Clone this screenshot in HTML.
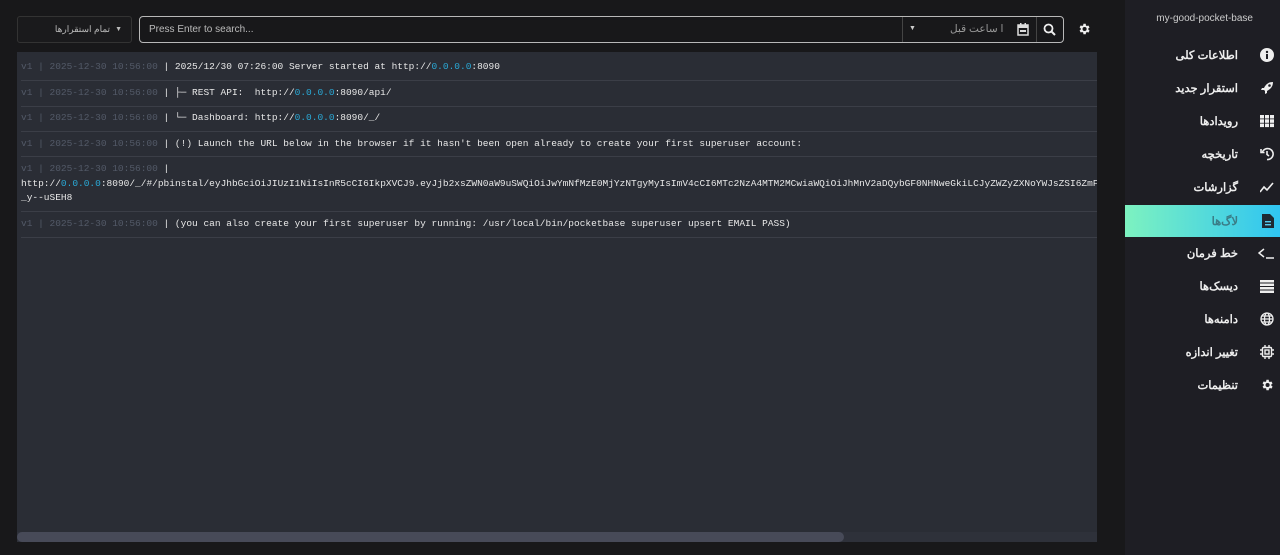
<!DOCTYPE html>
<html><head><meta charset="utf-8"><style>
*{box-sizing:border-box;margin:0;padding:0}
body{width:1280px;height:555px;background:#18181a;font-family:"Liberation Sans","Noto Sans CJK SC",sans-serif;position:relative;overflow:hidden;color:#ddd}
.sel{position:absolute;left:17px;top:16px;width:115px;height:27px;border:1px solid #333;border-radius:3px;background:#1a1a1c;font-size:9px;color:#bbb;display:flex;align-items:center;justify-content:flex-end;padding-right:9px;gap:5px}
.search{position:absolute;left:139px;top:16px;width:925px;height:27px;border:1px solid #b8b8b8;border-radius:4px;background:#18181a}
.search .ph{position:absolute;left:9px;top:7px;font-size:10px;color:#bbb}
.panel{position:absolute;left:17px;top:52px;width:1080px;height:490px;background:#2a2d35;overflow:hidden}
.row{position:absolute;left:4px;right:0;border-bottom:1px solid #3b3e47;font:9.5px/14.5px "Liberation Mono",monospace;color:#e8e8e8;white-space:pre;padding-left:0}
.d{color:#535a68}.c{color:#2aa9d6}
.sb{position:absolute;left:0;bottom:0;width:100%;height:10px;background:#2e313a}
.th{position:absolute;left:0;bottom:0;width:827px;height:10px;background:#474a58;border-radius:5px}
.side{position:absolute;left:1125px;top:0;width:155px;height:555px;background:#1e1e24}
.title{position:absolute;right:27px;top:13px;font-size:10px;color:#ccc}
.it{position:absolute;left:0;width:155px;height:33px;font-size:11.5px;font-weight:bold;color:#eee}
.it span{position:absolute;right:42px;top:9px;direction:rtl;white-space:nowrap}
.it svg{position:absolute;right:6px;top:9px}
.act{background:linear-gradient(90deg,#7df2c0,#2fc5f2);color:#3a7c86}
</style></head><body>
<div class="sel"><span>تمام استقرارها</span><span style="font-size:7px">▼</span></div>
<div class="search"><span class="ph">Press Enter to search...</span>
<div style="position:absolute;left:762px;top:0;width:1px;height:25px;background:#444"></div>
<span style="position:absolute;left:769px;top:8px;font-size:7px;color:#ccc">▼</span>
<span style="position:absolute;left:810px;top:6px;font-size:10.5px;color:#999;direction:rtl">ا ساعت قبل</span>
<svg style="position:absolute;left:877px;top:6px" width="12" height="13" viewBox="0 0 12 13"><rect x="1" y="2" width="10" height="10" fill="none" stroke="#ddd" stroke-width="1.5"/><rect x="1" y="2" width="10" height="3" fill="#ddd"/><rect x="3" y="0" width="1.5" height="3" fill="#ddd"/><rect x="7.5" y="0" width="1.5" height="3" fill="#ddd"/><rect x="3" y="7" width="6" height="2" fill="#ddd"/></svg>
<div style="position:absolute;left:896px;top:0;width:1px;height:25px;background:#444"></div>
<svg style="position:absolute;left:903px;top:6px" width="13" height="13" viewBox="0 0 13 13"><circle cx="5.5" cy="5.5" r="4" fill="none" stroke="#eee" stroke-width="1.8"/><path d="M8.5 8.5L12 12" stroke="#eee" stroke-width="2"/></svg>
</div>
<svg style="position:absolute;left:1077px;top:22px" width="14" height="14" viewBox="0 0 24 24"><path fill="#eee" d="M19.4 13a7.5 7.5 0 000-2l2.1-1.6-2-3.5-2.5 1a7 7 0 00-1.7-1L15 3h-4l-.4 2.8a7 7 0 00-1.7 1l-2.5-1-2 3.5L6.5 11a7.5 7.5 0 000 2l-2.1 1.6 2 3.5 2.5-1a7 7 0 001.7 1L11 21h4l.4-2.8a7 7 0 001.7-1l2.5 1 2-3.5zM13 15.5a3.5 3.5 0 110-7 3.5 3.5 0 010 7z"/></svg>
<div class="panel">
<div class="row" style="top:8px;height:21px"><span class="d">v1 | 2025-12-30 10:56:00 </span>| 2025/12/30 07:26:00 Server started at http://<span class="c">0.0.0.0</span>:8090</div>
<div class="row" style="top:34px;height:21px"><span class="d">v1 | 2025-12-30 10:56:00 </span>| ├─ REST API:  http://<span class="c">0.0.0.0</span>:8090/api/</div>
<div class="row" style="top:59px;height:21px"><span class="d">v1 | 2025-12-30 10:56:00 </span>| └─ Dashboard: http://<span class="c">0.0.0.0</span>:8090/_/</div>
<div class="row" style="top:85px;height:20px"><span class="d">v1 | 2025-12-30 10:56:00 </span>| (!) Launch the URL below in the browser if it hasn't been open already to create your first superuser account:</div>
<div class="row" style="top:110px;height:50px"><span class="d">v1 | 2025-12-30 10:56:00 </span>|
http://<span class="c">0.0.0.0</span>:8090/_/#/pbinstal/eyJhbGciOiJIUzI1NiIsInR5cCI6IkpXVCJ9.eyJjb2xsZWN0aW9uSWQiOiJwYmNfMzE0MjYzNTgyMyIsImV4cCI6MTc2NzA4MTM2MCwiaWQiOiJhMnV2aDQybGF0NHNweGkiLCJyZWZyZXNoYWJsZSI6ZmFsc2V9
_y--uSEH8</div>
<div class="row" style="top:165px;height:21px"><span class="d">v1 | 2025-12-30 10:56:00 </span>| (you can also create your first superuser by running: /usr/local/bin/pocketbase superuser upsert EMAIL PASS)</div>
<div class="sb"><div class="th"></div></div>
</div>
<div class="side">
<div class="title">my-good-pocket-base</div>
<div class="it" style="top:39px"><span>اطلاعات کلی</span><svg width="14" height="14" viewBox="0 0 14 14"><circle cx="7" cy="7" r="7" fill="#eee"/><rect x="6" y="6" width="2" height="5" fill="#1e1e24"/><circle cx="7" cy="4" r="1.2" fill="#1e1e24"/></svg></div>
<div class="it" style="top:72px"><span>استقرار جدید</span><svg width="14" height="14" viewBox="0 0 14 14"><path d="M13 1C9 1 6 3 4 7L2 7 1 9 4 9 5 10 5 13 7 12 7 10C11 8 13 5 13 1z" fill="#eee"/><circle cx="9.5" cy="4.5" r="1.3" fill="#1e1e24"/></svg></div>
<div class="it" style="top:105px"><span>رویدادها</span><svg width="14" height="14" viewBox="0 0 14 14" fill="#eee"><rect x="0" y="1" width="4" height="3.5"/><rect x="5" y="1" width="4" height="3.5"/><rect x="10" y="1" width="4" height="3.5"/><rect x="0" y="5.3" width="4" height="3.5"/><rect x="5" y="5.3" width="4" height="3.5"/><rect x="10" y="5.3" width="4" height="3.5"/><rect x="0" y="9.6" width="4" height="3.5"/><rect x="5" y="9.6" width="4" height="3.5"/><rect x="10" y="9.6" width="4" height="3.5"/></svg></div>
<div class="it" style="top:138px"><span>تاریخچه</span><svg width="14" height="14" viewBox="0 0 14 14" fill="none" stroke="#eee" stroke-width="1.6"><path d="M2.5 5A5.5 5.5 0 117 12.5"/><path d="M1 2v3.5h3.5"/><path d="M7 4v3.5l2 1.5"/></svg></div>
<div class="it" style="top:171px"><span>گزارشات</span><svg width="14" height="14" viewBox="0 0 14 14" fill="none" stroke="#eee" stroke-width="1.6"><path d="M0 12l4-5 3 3 6-7"/></svg></div>
<div class="it act" style="top:205px;height:32px"><span>لاگ‌ها</span><svg width="12" height="14" viewBox="0 0 12 14"><path d="M0 0h8l4 4v10H0z" fill="#1e2a33"/><rect x="3" y="7" width="6" height="1.4" fill="#5ce"/><rect x="3" y="10" width="6" height="1.4" fill="#5ce"/></svg></div>
<div class="it" style="top:237px"><span>خط فرمان</span><svg width="16" height="14" viewBox="0 0 16 14" fill="none" stroke="#eee" stroke-width="1.5"><path d="M6 3L1 7l5 4"/><path d="M8 12h8"/></svg></div>
<div class="it" style="top:270px"><span>دیسک‌ها</span><svg width="14" height="14" viewBox="0 0 14 14" fill="#eee"><rect y="1" width="14" height="2.5"/><rect y="4.5" width="14" height="2.5"/><rect y="8" width="14" height="2.5"/><rect y="11.5" width="14" height="2.5"/></svg></div>
<div class="it" style="top:303px"><span>دامنه‌ها</span><svg width="14" height="14" viewBox="0 0 14 14" fill="none" stroke="#eee" stroke-width="1.3"><circle cx="7" cy="7" r="6"/><ellipse cx="7" cy="7" rx="2.5" ry="6"/><path d="M1 7h12M2 4h10M2 10h10"/></svg></div>
<div class="it" style="top:336px"><span>تغییر اندازه</span><svg width="14" height="14" viewBox="0 0 14 14" fill="none" stroke="#eee" stroke-width="1.4"><rect x="2.5" y="2.5" width="9" height="9" rx="1"/><rect x="5" y="5" width="4" height="4"/><path d="M5 0v2.5M9 0v2.5M5 11.5V14M9 11.5V14M0 5h2.5M0 9h2.5M11.5 5H14M11.5 9H14"/></svg></div>
<div class="it" style="top:369px"><span>تنظیمات</span><svg width="14" height="14" viewBox="0 0 24 24"><path fill="#eee" d="M19.4 13a7.5 7.5 0 000-2l2.1-1.6-2-3.5-2.5 1a7 7 0 00-1.7-1L15 3h-4l-.4 2.8a7 7 0 00-1.7 1l-2.5-1-2 3.5L6.5 11a7.5 7.5 0 000 2l-2.1 1.6 2 3.5 2.5-1a7 7 0 001.7 1L11 21h4l.4-2.8a7 7 0 001.7-1l2.5 1 2-3.5zM13 15.5a3.5 3.5 0 110-7 3.5 3.5 0 010 7z"/></svg></div>
</div>
</body></html>
